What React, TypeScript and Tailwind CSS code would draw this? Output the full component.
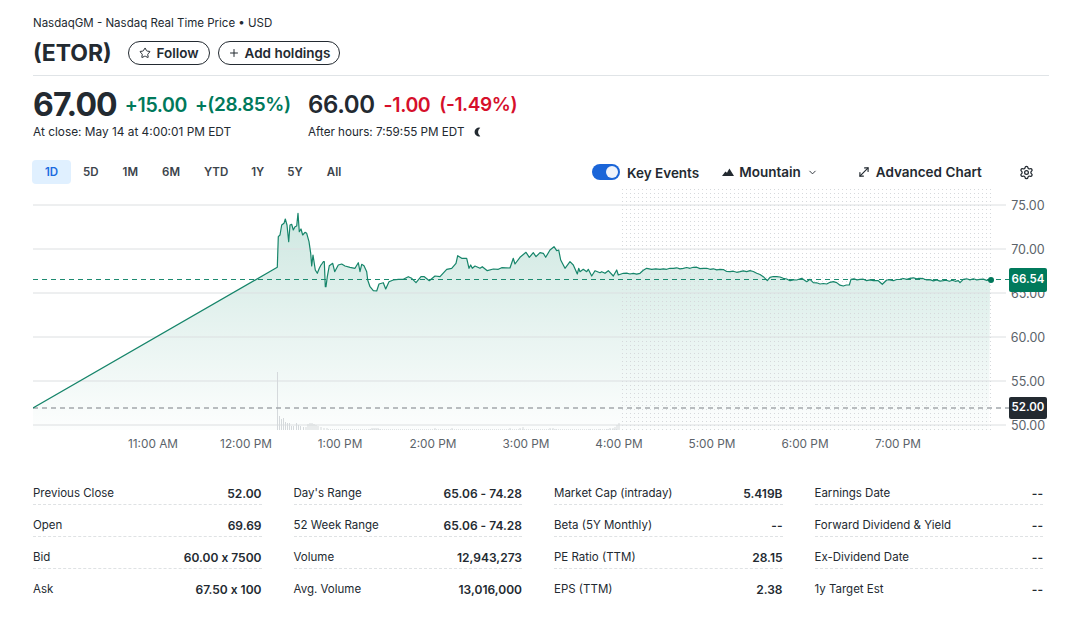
import React from "react";
import { ChevronDown, MoveDiagonal, Plus, Settings, Star } from "lucide-react";

// traced from the price line, first part in 3x crop coords from (240,200)
const lineA = [
  115, 110, 120, 105, 125, 75, 132, 70, 136, 57, 141, 75, 146, 125, 150, 75, 155, 73, 160, 90, 165, 80, 170, 78, 174, 40,
  178, 95, 183, 87, 188, 105, 195, 97, 200, 100, 207, 125, 212, 160, 215, 198, 219, 165, 226, 210, 232, 220, 238, 205,
  243, 195, 247, 190, 250, 185, 253, 185, 256, 260, 258, 260, 262, 230, 268, 197, 278, 190, 284, 215, 295, 195, 305, 192,
  315, 198, 330, 202, 345, 205, 355, 188, 360, 215, 365, 193, 372, 197, 380, 215, 383, 240, 390, 260, 400, 272, 410, 273,
  417, 252, 430, 248, 437, 267, 447, 245, 460, 240, 475, 238, 490, 238, 505, 230, 515, 235, 528, 248, 543, 230, 553, 230,
  568, 242, 585, 228, 600, 230, 620, 208, 635, 205, 648, 190, 653, 167, 665, 175, 680, 175, 687, 205, 692, 195, 697, 205,
  705, 198, 720, 205, 727, 200, 742, 212, 760, 207, 775, 208, 785, 203, 810, 204, 820, 175, 825, 192, 840, 172, 858, 157,
  868, 172, 880, 158, 888, 170, 900, 158, 910, 160, 917, 172, 930, 150, 942, 140, 950, 152, 956, 150, 962, 180, 975, 205,
  990, 185, 1000, 195, 1012, 222, 1016, 205, 1020, 215, 1030, 208, 1040, 215, 1045, 208, 1055, 228, 1065, 212, 1080, 218,
];
// second part in 3x crop coords from (560,150)
const lineB = [
  125, 365, 135, 370, 145, 362, 160, 378, 170, 360, 175, 375, 190, 370, 210, 372, 240, 370, 260, 355, 275, 358, 300, 358,
  320, 358, 340, 355, 370, 355, 400, 352, 430, 355, 450, 358, 480, 358, 510, 365, 540, 365, 570, 362, 590, 370, 610, 380,
  622, 392, 630, 382, 650, 380, 670, 385, 690, 392, 710, 390, 725, 385, 740, 395, 750, 388, 760, 398, 780, 402, 800, 402,
  820, 395, 850, 408, 868, 405, 873, 388, 900, 388, 940, 392, 955, 392, 967, 403, 980, 390, 1000, 392, 1020, 388, 1050, 385,
  1080, 385, 1100, 390, 1150, 392, 1195, 392, 1200, 398, 1210, 388, 1260, 388, 1290, 390,
];

const points: string[] = ["33,408", "277.3,267.3"];
for (let i = 0; i < lineA.length; i += 2) {
  points.push(`${(240 + lineA[i] / 3).toFixed(1)},${(200 + lineA[i + 1] / 3).toFixed(1)}`);
}
for (let i = 0; i < lineB.length; i += 2) {
  const x = 560 + lineB[i] / 3;
  const y = 150 + lineB[i + 1] / 3;
  points.push(`${x.toFixed(1)},${y.toFixed(1)}`);
  // small ticks between the traced points, the real line is jaggier
  if (i + 2 < lineB.length) {
    const nx = 560 + lineB[i + 2] / 3;
    const ny = 150 + lineB[i + 3] / 3;
    const steps = Math.floor((nx - x) / 3);
    for (let s = 1; s < steps; s++) {
      const t = s / steps;
      const wiggle = s % 2 === 0 ? 0.6 : -0.5;
      points.push(`${(x + (nx - x) * t).toFixed(1)},${(y + (ny - y) * t + wiggle).toFixed(1)}`);
    }
  }
}
const linePath = "M" + points.join(" L");
const areaPath = linePath + " L989,430 L33,430 Z";

// volume bars below the line, [x, height]
const volumes = [
  [277.5, 58], [279.5, 14], [281.5, 11], [283.5, 12], [285.5, 8], [287.5, 7], [289.5, 7], [291.5, 4], [293.5, 4], [296.5, 7],
  [298.5, 5], [300.5, 4], [303.5, 3], [306, 3], [308, 6], [310, 7], [312, 7], [314, 6], [316, 5], [318, 4], [321, 3], [324, 2],
  [327, 2], [376, 2], [370, 1], [372, 2], [374, 2], [378, 2], [380, 1], [435, 2], [452, 2], [510, 2], [520, 2], [523, 3], [550, 2],
  [553, 2], [556, 1], [590, 1], [600, 1], [607, 1], [610, 2], [613, 2], [615, 3], [617, 5], [619, 7],
];
const faintBars = Array.from({ length: 145 }, (_, i) => 328 + i * 2);

const grid = [
  { y: 205, label: "75.00" },
  { y: 249, label: "70.00" },
  { y: 293, label: "65.00" },
  { y: 337, label: "60.00" },
  { y: 381, label: "55.00" },
  { y: 425, label: "50.00" },
];

const times = [
  { x: 153, label: "11:00 AM" },
  { x: 246, label: "12:00 PM" },
  { x: 340, label: "1:00 PM" },
  { x: 433, label: "2:00 PM" },
  { x: 526, label: "3:00 PM" },
  { x: 619, label: "4:00 PM" },
  { x: 712, label: "5:00 PM" },
  { x: 805, label: "6:00 PM" },
  { x: 898, label: "7:00 PM" },
];

const ranges = ["1D", "5D", "1M", "6M", "YTD", "1Y", "5Y", "All"];

const stats = [
  [
    ["Previous Close", "52.00"],
    ["Open", "69.69"],
    ["Bid", "60.00 x 7500"],
    ["Ask", "67.50 x 100"],
  ],
  [
    ["Day's Range", "65.06 - 74.28"],
    ["52 Week Range", "65.06 - 74.28"],
    ["Volume", "12,943,273"],
    ["Avg. Volume", "13,016,000"],
  ],
  [
    ["Market Cap (intraday)", "5.419B"],
    ["Beta (5Y Monthly)", "--"],
    ["PE Ratio (TTM)", "28.15"],
    ["EPS (TTM)", "2.38"],
  ],
  [
    ["Earnings Date", "--"],
    ["Forward Dividend & Yield", "--"],
    ["Ex-Dividend Date", "--"],
    ["1y Target Est", "--"],
  ],
];

const Chart = () => (
  <div className="relative mt-[5px] h-[261px] w-[1016px]">
    <svg width="1016" height="261" viewBox="33 189 1016 261" className="block">
      <defs>
        <linearGradient id="area" gradientUnits="userSpaceOnUse" x1="0" y1="215" x2="0" y2="430">
          <stop offset="0" stopColor="#008463" stopOpacity="0.19" />
          <stop offset="1" stopColor="#008463" stopOpacity="0.01" />
        </linearGradient>
        <pattern id="dots" x="622" y="189" width="4" height="4" patternUnits="userSpaceOnUse">
          <rect width="1" height="1" fill="#d6d9dc" />
        </pattern>
      </defs>
      <path d={areaPath} fill="url(#area)" />
      <rect x="621" y="189" width="371" height="241" fill="url(#dots)" />
      {grid.map((g) => (
        <line key={g.y} x1="33" x2="1006" y1={g.y} y2={g.y} stroke="#dcdfe1" strokeWidth="1" />
      ))}
      {grid.map((g) => (
        <text key={g.label} x="1028" y={g.y + 4.5} textAnchor="middle" fontSize="12.5" fill="#5b636a">
          {g.label}
        </text>
      ))}
      {faintBars.map((x) => (
        <rect key={x} x={x} y={429} width="1" height="1" fill="#dfe2e4" />
      ))}
      {volumes.map(([x, h]) => (
        <rect key={x} x={x - 0.5} y={430 - h} width="1" height={h} fill="#d5d9dc" />
      ))}
      <line x1="33" x2="1010" y1="408" y2="408" stroke="#a3a8ac" strokeWidth="1.3" strokeDasharray="5 4" />
      <line x1="33" x2="1010" y1="279.5" y2="279.5" stroke="#1d8a70" strokeWidth="1" strokeDasharray="5 4" />
      <path d={linePath} fill="none" stroke="#16856a" strokeWidth="1.2" strokeLinejoin="round" />
      <circle cx="991" cy="280" r="3" fill="#00775a" />
      {times.map((t) => (
        <text key={t.label} x={t.x} y="448" textAnchor="middle" fontSize="11.8" fill="#5b636a">
          {t.label}
        </text>
      ))}
    </svg>
    {/* price tags over the axis */}
    <div className="absolute left-[976px] top-[79px] flex h-[24px] w-[38px] items-center justify-center rounded-[2px] bg-[#007a5c] text-[11.5px] font-semibold text-white">
      66.54
    </div>
    <div className="absolute left-[976px] top-[208px] flex h-[22px] w-[38px] items-center justify-center rounded-[2px] bg-[#232a31] text-[11.5px] font-semibold text-white">
      52.00
    </div>
  </div>
);

const App = () => {
  return (
    <div className="h-[617px] w-[1073px] overflow-hidden bg-white pl-[33px] pr-[24px] pt-[15px] font-['Inter',sans-serif] text-[#232a31]">
      {/* header */}
      <div className="text-[11.5px] leading-[16px]">NasdaqGM - Nasdaq Real Time Price • USD</div>
      <div className="mt-[4px] flex h-[36px] items-center">
        <h1 className="w-[79px] text-[23px] font-bold leading-[30px] whitespace-nowrap">(ETOR)</h1>
        <button className="ml-[16px] flex h-[24px] w-[82px] items-center justify-center gap-[5px] rounded-full border border-[#232a31] text-[13.5px] font-semibold">
          <Star className="size-[12px]" strokeWidth={2} />
          Follow
        </button>
        <button className="ml-[8px] flex h-[24px] w-[122px] items-center justify-center gap-[5px] rounded-full border border-[#232a31] text-[13.5px] font-semibold">
          <Plus className="size-[12px]" strokeWidth={2} />
          Add holdings
        </button>
      </div>
      <div className="mt-[4px] border-b border-[#e0e4e7]" />

      {/* quote */}
      <div className="mt-[13px] flex">
        <div className="w-[275px]">
          <div className="flex h-[32px] items-center whitespace-nowrap">
            <span className="text-[32px] font-bold leading-[32px] tracking-[-0.9px]">67.00</span>
            <span className="ml-[8px] text-[19.5px] font-semibold leading-[32px] tracking-[-0.4px] text-[#00795b]">+15.00</span>
            <span className="ml-[8px] text-[19px] font-semibold leading-[32px] tracking-[-0.4px] text-[#00795b]">+(28.85%)</span>
          </div>
          <div className="mt-[3px] text-[11.85px] leading-[16px]">At close: May 14 at 4:00:01 PM EDT</div>
        </div>
        <div>
          <div className="flex h-[32px] items-center whitespace-nowrap">
            <span className="text-[24px] font-semibold leading-[32px] tracking-[-0.4px]">66.00</span>
            <span className="ml-[9px] text-[19.5px] font-semibold leading-[32px] tracking-[-0.4px] text-[#d60f2b]">-1.00</span>
            <span className="ml-[9px] text-[19px] font-semibold leading-[32px] tracking-[-0.4px] text-[#d60f2b]">(-1.49%)</span>
          </div>
          <div className="mt-[3px] flex items-center text-[11.65px] leading-[16px]">
            After hours: 7:59:55 PM EDT
            <svg viewBox="0 0 12 12" className="ml-[10px] size-[10px]" fill="#232a31">
              <path d="M7.5 0.8A5.4 5.4 0 1 0 7.5 11.2 6.4 6.4 0 0 1 7.5 0.8Z" />
            </svg>
          </div>
        </div>
      </div>

      {/* chart toolbar */}
      <div className="mt-[20px] flex h-[24px] items-center text-[#232a31]">
        <div className="-ml-px flex items-center text-[11.5px] font-semibold">
          {ranges.map((r) => (
            <button
              key={r}
              className={
                r === "1D"
                  ? "h-[24px] w-[39px] rounded-[4px] bg-[#e0f0ff] pt-px text-[#1a6be0]"
                  : r === "1Y"
                    ? "h-[24px] px-[11px] pt-px text-[#3c444b]"
                    : "h-[24px] px-[12px] pt-px text-[#3c444b]"
              }
            >
              {r}
            </button>
          ))}
        </div>
        <div className="ml-auto flex w-[457px] items-center text-[13.5px] font-semibold">
          <span className="flex h-[16px] w-[28px] items-center justify-end rounded-full bg-[#1a65d8] pr-[2px]">
            <span className="size-[12px] rounded-full bg-[#eef3fb]" />
          </span>
          <span className="ml-[7px] mt-[2px]">Key Events</span>
          <svg viewBox="0 0 12 8" className="ml-[23px] h-[8px] w-[12px]" fill="#232a31">
            <path d="M0 8 3.4 3.4 5 4.8 7.4 0.6 12 8Z" />
          </svg>
          <span className="ml-[5px]">Mountain</span>
          <ChevronDown className="ml-[6px] size-[11px]" strokeWidth={2} />
          <MoveDiagonal className="ml-[39px] size-[14px]" strokeWidth={2} />
          <span className="ml-[5px]">Advanced Chart</span>
          <Settings className="ml-[37px] mt-[1px] size-[15px]" strokeWidth={2} />
        </div>
      </div>

      <Chart />

      {/* key statistics */}
      <div className="mt-[23px] grid w-[1010px] grid-cols-4 gap-x-[32px] text-[12px]">
        {stats.map((col, i) => (
          <div key={i}>
            {col.map(([label, value], j) => (
              <div
                key={label}
                className={
                  j < 3
                    ? "flex h-[32px] items-center justify-between border-b border-dashed border-[#dfe2e4] pt-[11px]"
                    : "flex h-[32px] items-center justify-between pt-[9px]"
                }
              >
                <span className="text-[11.5px] text-[#232a31]">{label}</span>
                <span className="font-semibold [font-feature-settings:'calt'_0]">{value}</span>
              </div>
            ))}
          </div>
        ))}
      </div>
    </div>
  );
};

export default App;
